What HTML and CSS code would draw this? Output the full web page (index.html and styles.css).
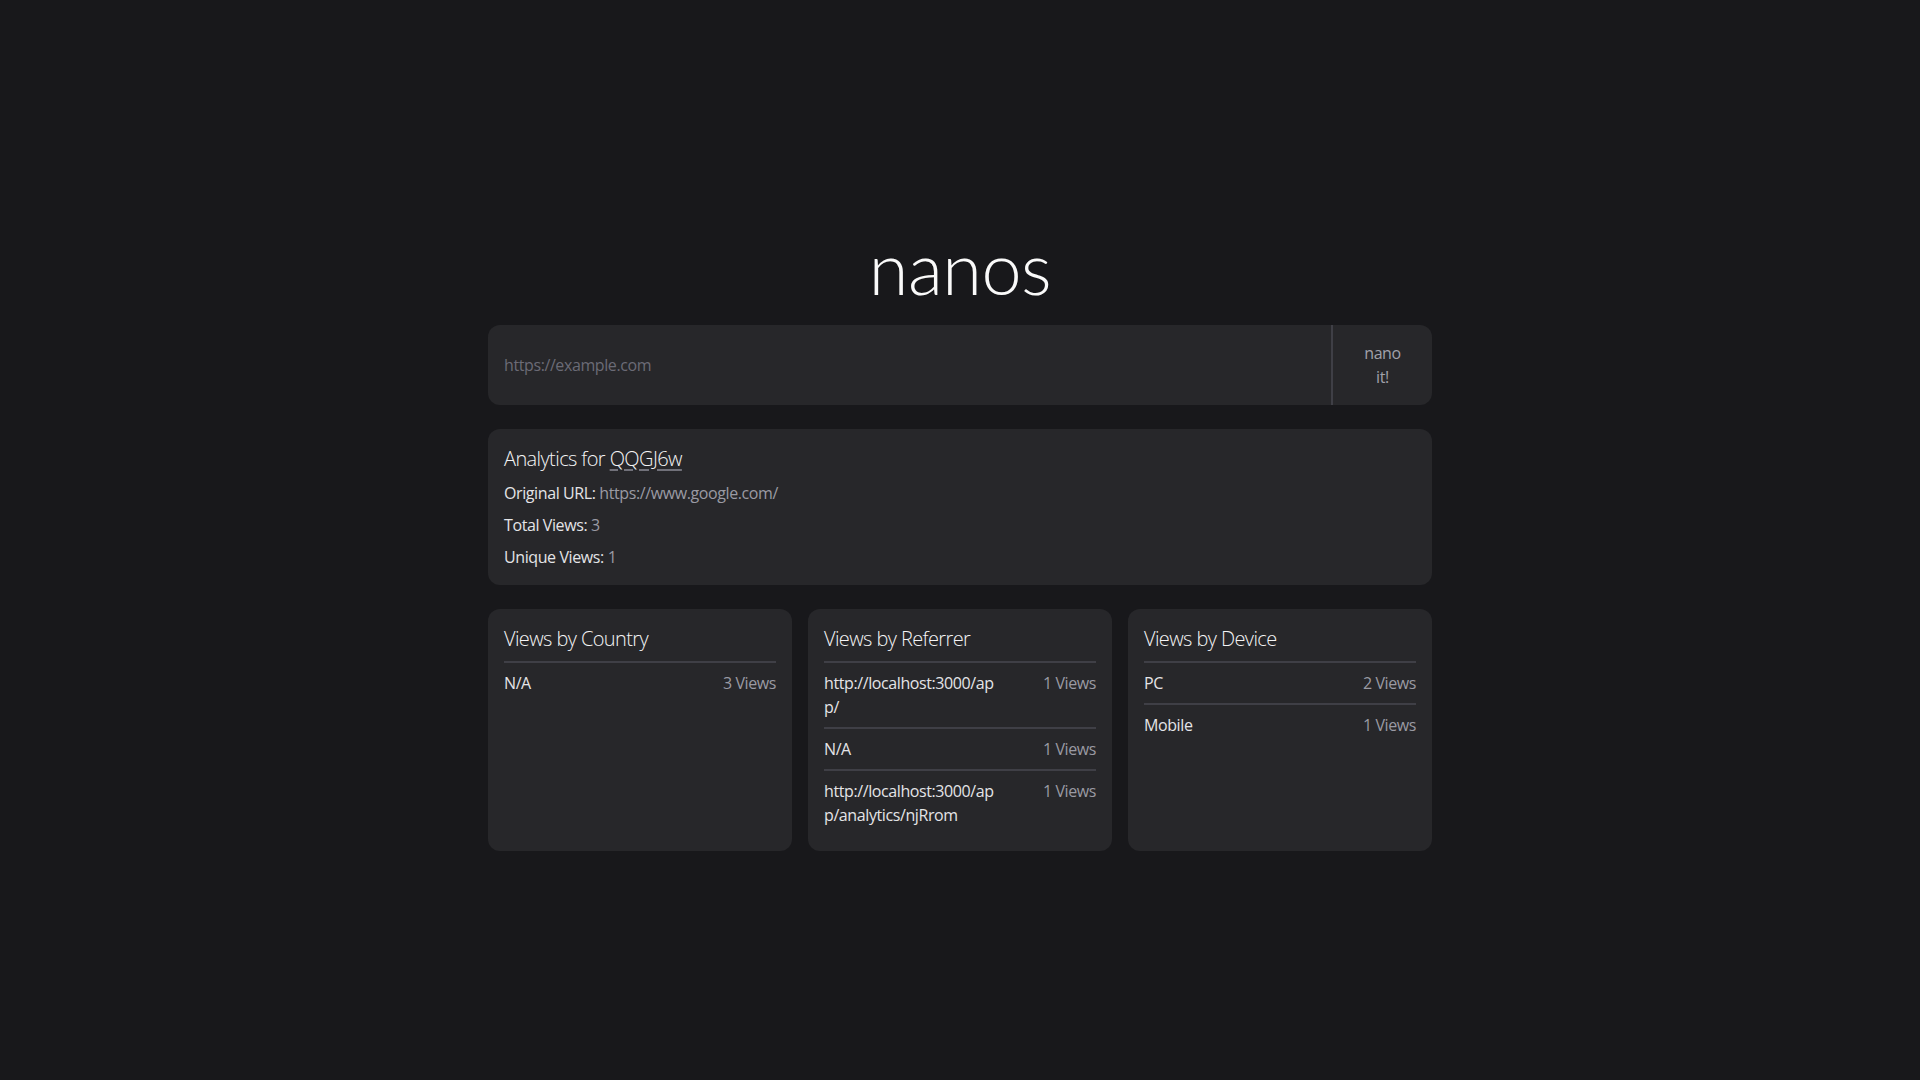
FILE: index.html
```html
<!DOCTYPE html>
<html lang="en">
<head>
<meta charset="utf-8">
<title>nanos</title>
<link rel="stylesheet" href="styles.css">
</head>
<body>
<main class="page">
  <h1 class="brand">nanos</h1>
  <form class="shorten">
    <input class="shorten-input" type="text" placeholder="https://example.com">
    <button class="shorten-btn" type="button">nano it!</button>
  </form>
  <section class="card summary">
    <h2 class="card-title">Analytics for <a class="code-link" href="#">QQGJ6w</a></h2>
    <p class="meta"><span class="meta-label">Original URL:</span> <span class="meta-value">https://www.google.com/</span></p>
    <p class="meta"><span class="meta-label">Total Views:</span> <span class="meta-value">3</span></p>
    <p class="meta"><span class="meta-label">Unique Views:</span> <span class="meta-value">1</span></p>
  </section>
  <div class="stats">
    <section class="card stat">
      <h3 class="card-title stat-title">Views by Country</h3>
      <ul class="stat-list">
        <li class="stat-row"><span class="stat-name">N/A</span><span class="stat-count">3 Views</span></li>
      </ul>
    </section>
    <section class="card stat">
      <h3 class="card-title stat-title">Views by Referrer</h3>
      <ul class="stat-list">
        <li class="stat-row"><span class="stat-name">http://localhost:3000/app/</span><span class="stat-count">1 Views</span></li>
        <li class="stat-row"><span class="stat-name">N/A</span><span class="stat-count">1 Views</span></li>
        <li class="stat-row"><span class="stat-name">http://localhost:3000/app/analytics/njRrom</span><span class="stat-count">1 Views</span></li>
      </ul>
    </section>
    <section class="card stat">
      <h3 class="card-title stat-title">Views by Device</h3>
      <ul class="stat-list">
        <li class="stat-row"><span class="stat-name">PC</span><span class="stat-count">2 Views</span></li>
        <li class="stat-row"><span class="stat-name">Mobile</span><span class="stat-count">1 Views</span></li>
      </ul>
    </section>
  </div>
</main>
</body>
</html>
```
FILE: styles.css
```css
* { box-sizing: border-box; }

html, body {
  margin: 0;
  padding: 0;
}

body {
  background: #18181b;
  color: #e4e4e7;
  font-family: "Open Sans", "Noto Sans", sans-serif;
  font-size: 16px;
  line-height: 24px;
  letter-spacing: -0.4px;
  min-height: 100vh;
  padding-top: 1px;
  display: flex;
  align-items: center;
  justify-content: center;
}

.page {
  width: 944px;
  display: flex;
  flex-direction: column;
}

.brand {
  margin: 0 0 22px;
  font-family: "Lato", "Open Sans", sans-serif;
  font-weight: 300;
  font-size: 72px;
  line-height: 72px;
  letter-spacing: -0.5px;
  text-align: center;
  color: #fafafa;
}

.shorten {
  display: flex;
  height: 80px;
  background: #27272a;
  border-radius: 12px;
  overflow: hidden;
  margin: 0 0 24px;
}

.shorten-input {
  flex: 1;
  min-width: 0;
  background: transparent;
  border: none;
  outline: none;
  padding: 0 16px;
  font-family: inherit;
  font-size: 16px;
  letter-spacing: -0.4px;
  color: #e4e4e7;
}

.shorten-input::placeholder {
  color: #6b6b76;
}

.shorten-btn {
  width: 101px;
  background: transparent;
  border: none;
  border-left: 2px solid #3f3f46;
  padding: 0 24px;
  font-family: inherit;
  font-size: 16px;
  line-height: 24px;
  letter-spacing: -0.4px;
  color: #a1a1aa;
  cursor: pointer;
}

.card {
  background: #27272a;
  border-radius: 12px;
  padding: 16px;
}

.summary {
  margin: 0 0 24px;
}

.card-title {
  margin: 0 0 8px;
  font-size: 20px;
  line-height: 28px;
  font-weight: 350;
  letter-spacing: -0.6px;
  color: #f4f4f5;
}

.code-link {
  color: #f4f4f5;
  text-decoration: underline;
  text-decoration-color: #71717a;
  text-underline-offset: 3px;
}

.meta {
  margin: 8px 0 0;
}

.card-title + .meta {
  margin-top: 0;
}

.meta-label {
  font-weight: 500;
  color: #e4e4e7;
}

.meta-value {
  color: #9a9aa3;
}

.stats {
  display: grid;
  grid-template-columns: repeat(3, 1fr);
  gap: 16px;
}

.stat-list {
  list-style: none;
  margin: 0;
  padding: 0;
}

.stat-row {
  display: flex;
  justify-content: space-between;
  align-items: flex-start;
  gap: 16px;
  padding: 8px 0;
  border-top: 2px solid #3f3f46;
}

.stat-name {
  max-width: 176px;
  word-break: break-all;
  font-weight: 500;
  color: #e4e4e7;
}

.stat-count {
  flex-shrink: 0;
  color: #9a9aa3;
}
```
